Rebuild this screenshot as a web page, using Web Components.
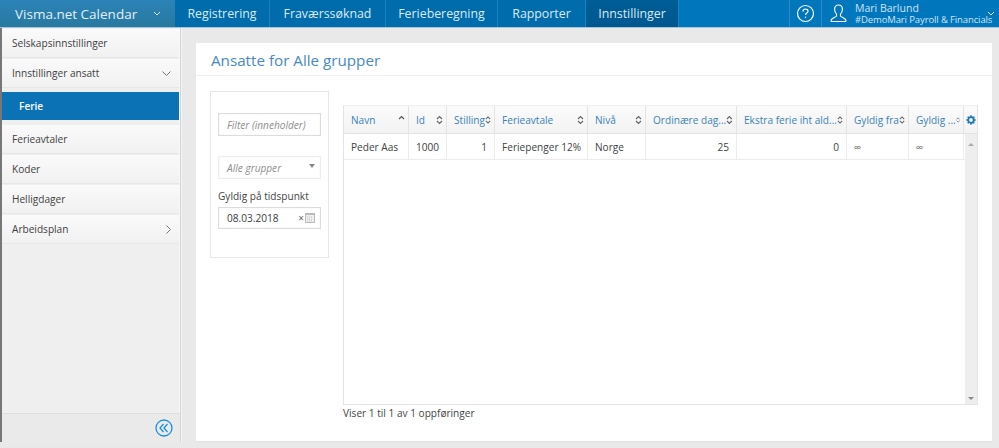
<!DOCTYPE html>
<html>
<head>
<meta charset="utf-8">
<style>
  html, body { margin: 0; height: 100%; overflow: hidden; }
  body { font-family: "Open Sans", sans-serif; background: #e9e9e9; }
  #app { display: flex; flex-direction: column; height: 448px; }
  #main { display: flex; flex: 1; min-height: 0; }
</style>
</head>
<body>
<div id="app">
  <top-bar></top-bar>
  <div id="main">
    <side-menu></side-menu>
    <content-card title-text="Ansatte for Alle grupper">
      <filter-panel></filter-panel>
      <employee-table></employee-table>
    </content-card>
  </div>
</div>
<script>
class TopBar extends HTMLElement {
  constructor() {
    super();
    this.attachShadow({mode: 'open'});
  }
  connectedCallback() {
    this.shadowRoot.innerHTML = `
      <style>
        :host { display: flex; height: 28px; background: #0076bd; color: #fff; border-bottom: 1px solid #a9c4d6; box-sizing: border-box; }
        a { display: flex; align-items: center; font-size: 12.35px; color: #d9ebf6; border-right: 1px solid #1a82c0; box-sizing: border-box; height: 27px; justify-content: center; }
        .brand { width: 175px; background: linear-gradient(#2b83b8, #28799f 100%); font-size: 13.5px; padding-left: 15px; justify-content: flex-start; border: 0; color: #e3eff6; }
        .brand svg { margin-left: 16px; }
        .nav { background: #006cac; }
        .on { background: linear-gradient(#005d96, #00588f); }
        .grow { flex: 1; }
        .help { width: 33px; border-left: 1px solid #2b8dc8; display: flex; align-items: center; justify-content: center; border-right: 1px solid #2b8dc8; box-sizing: border-box; }
        .user { width: 177px; display: flex; align-items: center; }
        .user > svg:first-child { margin-left: 8px; }
        .who { margin-left: 8px; line-height: 11px; white-space: nowrap; color: #cfe4f2; width: 124px; }
        .who b { font-weight: 400; font-size: 10.5px; display: block; }
        .who span { font-size: 9.5px; letter-spacing: -.12px; display: block; }
        .user .chev { margin-left: 8px; }
      </style>
      <a class="brand">Visma.net Calendar
        <svg width="8" height="5" viewBox="0 0 8 5" fill="none" stroke="#d8e8f2" stroke-width="1"><path d="M1 1l3 3 3-3"/></svg></a>
      <a class="nav" style="width:95px">Registrering</a>
      <a class="nav" style="width:116px">Fraværssøknad</a>
      <a class="nav" style="width:112px">Ferieberegning</a>
      <a class="nav" style="width:88px">Rapporter</a>
      <a class="nav on" style="width:93px">Innstillinger</a>
      <div class="grow"></div>
      <div class="help">
        <svg width="19" height="19" viewBox="0 0 19 19" fill="none" stroke="#fff" stroke-width="1.2"><circle cx="9.5" cy="9.5" r="8"/><path d="M7 7.4c0-1.5 1.1-2.4 2.5-2.4s2.5.9 2.5 2.2c0 1.9-2.5 1.9-2.5 3.9"/><path d="M9.5 12.6v1.3"/></svg>
      </div>
      <div class="user">
        <svg width="17" height="19" viewBox="0 0 17 19" fill="none" stroke="#fff" stroke-width="1.1"><path d="M8.5 1C6 1 4.6 2.8 4.6 5.2c0 2 .8 3.8 1.9 4.9v2c0 .8-5.3 2.2-5.3 4.1v1.3h14.6v-1.3c0-1.9-5.3-3.3-5.3-4.1v-2c1.1-1.1 1.9-2.9 1.9-4.9C12.4 2.8 11 1 8.5 1z"/></svg>
        <div class="who"><b>Mari Barlund</b><span>#DemoMari Payroll &amp; Financials</span></div>
        <svg class="chev" width="8" height="5" viewBox="0 0 8 5" fill="none" stroke="#d8e8f2" stroke-width="1"><path d="M1 1l3 3 3-3"/></svg>
      </div>`;
  }
}
customElements.define('top-bar', TopBar);

class MenuItem extends HTMLElement {
  constructor() {
    super();
    this.attachShadow({mode: 'open'});
  }
  connectedCallback() {
    const icon = this.getAttribute('icon');
    const paths = { down: 'M.5 .5l4 4 4-4', right: 'M.5 .5l4 4-4 4' };
    const size = icon === 'right' ? 'width="5" height="9" viewBox="0 0 5 9"' : 'width="9" height="5" viewBox="0 0 9 5"';
    this.shadowRoot.innerHTML = `
      <style>
        :host { display: flex; align-items: center; height: 28px; padding: 0 8px 0 10px; background: linear-gradient(#fafafa, #f1f1f1); border-bottom: 1px solid #e7e7e7; margin-bottom: 1px; font-size: 10.1px; color: #414141; justify-content: space-between; box-sizing: content-box; }
        :host([active]) { background: #0b72b5; color: #fff; font-weight: 600; padding-left: 17px; height: 28px; border: 0; margin: 4px 0 5px; }
        svg { display: block; }
      </style>
      <slot></slot>
      ${icon ? `<svg ${size} fill="none" stroke="#777" stroke-width="1">
        <path d="${paths[icon]}"/></svg>` : ''}`;
  }
}
customElements.define('menu-item', MenuItem);

class SideMenu extends HTMLElement {
  constructor() {
    super();
    this.attachShadow({mode: 'open'});
  }
  connectedCallback() {
    this.shadowRoot.innerHTML = `
      <style>
        :host { display: flex; flex-direction: column; width: 181px; flex: none; box-sizing: border-box; border-left: 2px solid #777; border-right: 1px solid #d4d4d4; background: #efefef; height: 414px; box-shadow: 1px 0 0 #f4f4f4; }
        .items { flex: 1; border-right: 1px solid #f8f8f8; padding-top: 1px; }
        .foot { height: 28px; display: flex; align-items: center; justify-content: flex-end; padding-right: 7px; background: #eaeaea; border-top: 1px solid #dedede; box-sizing: content-box; }
      </style>
      <div class="items">
        <menu-item>Selskapsinnstillinger</menu-item>
        <menu-item icon="down">Innstillinger ansatt</menu-item>
        <menu-item active>Ferie</menu-item>
        <menu-item>Ferieavtaler</menu-item>
        <menu-item>Koder</menu-item>
        <menu-item>Helligdager</menu-item>
        <menu-item icon="right">Arbeidsplan</menu-item>
      </div>
      <div class="foot">
        <svg width="18" height="18" viewBox="0 0 18 18" fill="none" stroke="#1b8fdc" stroke-width="1.3"><circle cx="9" cy="9" r="8"/><path d="M8.5 5L5 9l3.5 4M12.5 5L9 9l3.5 4"/></svg>
      </div>`;
  }
}
customElements.define('side-menu', SideMenu);

class ContentCard extends HTMLElement {
  constructor() {
    super();
    this.attachShadow({mode: 'open'});
  }
  connectedCallback() {
    this.shadowRoot.innerHTML = `
      <style>
        :host { display: flex; flex-direction: column; width: 796px; height: 399px; margin: 15px 0 0 15px; background: #fff; box-sizing: border-box; border-bottom: 1px solid #e2e2e2; }
        h1 { margin: 0; height: 33px; box-sizing: border-box; border-bottom: 1px solid #f1f1f1; padding: 5px 0 0 15px; font-size: 15.2px; font-weight: 400; line-height: 24px; color: #4a89bd; }
        .body { display: flex; padding: 15px 14px 0 14px; gap: 14px; align-items: flex-start; }
      </style>
      <h1>${this.getAttribute('title-text')}</h1>
      <div class="body"><slot></slot></div>`;
  }
}
customElements.define('content-card', ContentCard);

class FilterPanel extends HTMLElement {
  constructor() {
    super();
    this.attachShadow({mode: 'open'});
  }
  connectedCallback() {
    this.shadowRoot.innerHTML = `
      <style>
        :host { display: block; width: 119px; height: 167px; flex: none; box-sizing: border-box; border: 1px solid #e6e6e6; padding: 21px 7px 0; font-size: 10.1px; color: #444; }
        .box { height: 23px; box-sizing: border-box; border: 1px solid #dcdcdc; display: flex; align-items: center; padding-left: 8px; box-shadow: inset 0 0 2px #f0f0f0; }
        .ph { font-style: italic; color: #8d8d8d; }
        .filter { margin-bottom: 20px; }
        .group { border-color: #eeeeee; justify-content: space-between; padding-right: 5px; }
        .caret { width: 0; height: 0; border: 3px solid transparent; border-top: 4px solid #888; border-bottom: 0; margin-top: -3px; }
        label { display: block; margin: 10px 0 4px; line-height: 14px; }
        .date { color: #3d3d3d; padding: 0 5px 1px 8px; height: 22px; }
        .date span { flex: 1; }
        .date i { font-style: normal; color: #666; font-size: 10px; margin-right: 1px; }
      </style>
      <div class="box filter ph">Filter (inneholder)</div>
      <div class="box group ph">Alle grupper<div class="caret"></div></div>
      <label>Gyldig på tidspunkt</label>
      <div class="box date"><span>08.03.2018</span><i>×</i>
        <svg width="10" height="11" viewBox="0 0 10 11"><rect x=".5" y="1.5" width="9" height="9" fill="#eee" stroke="#bbb"/><path d="M0 1h10v2H0z" fill="#bbb"/><path d="M2 5h6M2 7h6M2 9h6" stroke="#c4c4c4" stroke-dasharray="1 1"/></svg>
      </div>`;
  }
}
customElements.define('filter-panel', FilterPanel);

class EmployeeTable extends HTMLElement {
  constructor() {
    super();
    this.attachShadow({mode: 'open'});
  }
  connectedCallback() {
    const cols = [
      ['Navn', 65, 'up'], ['Id', 38], ['Stilling', 48], ['Ferieavtale', 93], ['Nivå', 58],
      ['Ordinære dag...', 91], ['Ekstra ferie iht ald...', 110], ['Gyldig fra', 62], ['Gyldig ...', 55]
    ];
    const row = ['Peder Aas', '1000', '1', 'Feriepenger 12%', 'Norge', '25', '0', '∞', '∞'];
    const numeric = [1, 2, 5, 6];
    const grid = cols.map(c => c[1] + 'px').join(' ') + ' 1fr';
    const sort = up => `<svg width="7" height="10" viewBox="0 0 7 10" fill="none" stroke="${up ? '#555' : '#666'}" stroke-width="1.2">
      <path d="M1 4l2.5-2.5L6 4"/>${up ? '' : '<path d="M1 6l2.5 2.5L6 6"/>'}</svg>`;
    this.shadowRoot.innerHTML = `
      <style>
        :host { display: flex; flex-direction: column; flex: 1; min-width: 0; margin-top: 14px; font-size: 10.1px; }
        .frame { height: 300px; box-sizing: border-box; border: 1px solid #e4e4e4; border-top: 1px solid #f0f0f0; display: flex; flex-direction: column; position: relative; }
        .head, .row { display: grid; grid-template-columns: ${grid}; }
        .head { height: 27px; background: linear-gradient(#fbfbfb, #f3f3f3); border-bottom: 1px solid #e2e2e2; box-sizing: content-box; }
        .th { display: flex; align-items: center; justify-content: space-between; padding: 1px 3px 0 7px; border-right: 1px solid #e4e4e4; color: #3c82b4; white-space: nowrap; overflow: hidden; }
        .gear { display: flex; align-items: center; justify-content: center; }
        .body { display: flex; flex: 1; min-height: 0; }
        .rows { flex: 1; }
        .row { grid-template-columns: ${cols.map(c => c[1] + 'px').join(' ')}; height: 25px; border-bottom: 1px solid #ececec; box-sizing: content-box; color: #3f3f3f; }
        .td { display: flex; align-items: center; padding: 1px 7px 0; border-right: 1px solid #ececec; white-space: nowrap; }
        .td.num { justify-content: flex-end; }
        .td.inf { color: #666; }
        .scroll { width: 12px; background: #eeeeee; display: flex; flex-direction: column; justify-content: space-between; align-items: center; padding: 9px 0 4px; box-sizing: border-box; }
        .scroll div { width: 0; height: 0; border: 3px solid transparent; }
        .scroll .a { border-bottom: 3px solid #aaa; border-top: 0; }
        .scroll .b { border-top: 3px solid #888; border-bottom: 0; }
        .info { margin-top: 1px; line-height: 15px; color: #444; }
      </style>
      <div class="frame">
        <div class="head">
          ${cols.map(c => `<div class="th"><span>${c[0]}</span>${sort(c[2])}</div>`).join('')}
          <div class="gear">
            <svg width="10" height="10" viewBox="0 0 10 10"><circle cx="5" cy="5" r="2.8" fill="none" stroke="#1878b8" stroke-width="1.8"/><path d="M5 .3v2M5 7.7v2M.3 5h2M7.7 5h2M1.7 1.7l1.4 1.4M6.9 6.9l1.4 1.4M1.7 8.3l1.4-1.4M6.9 3.1l1.4-1.4" stroke="#1878b8" stroke-width="1.5"/></svg>
          </div>
        </div>
        <div class="body">
          <div class="rows">
            <div class="row">${row.map((t, i) => `<div class="td ${numeric.includes(i) ? 'num' : ''} ${t === '∞' ? 'inf' : ''}">${t}</div>`).join('')}</div>
          </div>
          <div class="scroll"><div class="a"></div><div class="b"></div></div>
        </div>
      </div>
      <div class="info">Viser 1 til 1 av 1 oppføringer</div>`;
  }
}
customElements.define('employee-table', EmployeeTable);
</script>
</body>
</html>
